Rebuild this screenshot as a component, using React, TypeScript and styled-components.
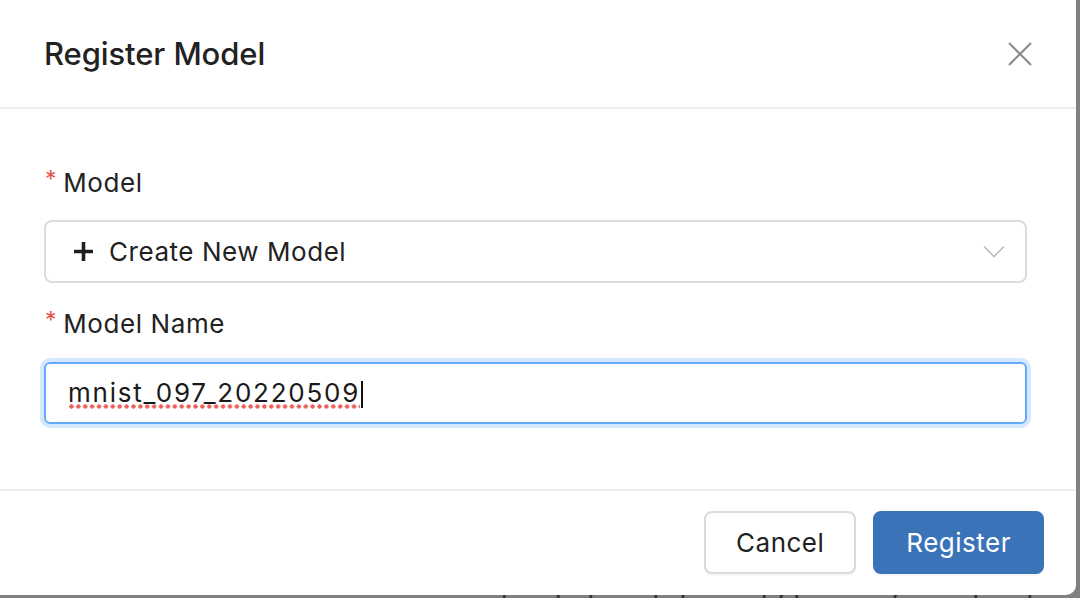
import React from "react";
import styled, { createGlobalStyle } from "styled-components";

const Global = createGlobalStyle`
  html, body { margin: 0; padding: 0; }
  body { font-family: Inter, "Liberation Sans", sans-serif; }
  * { box-sizing: border-box; }
`;

const Page = styled.div`
  position: relative;
  width: 1080px;
  height: 598px;
  overflow: hidden;
  background: #808080;
  padding: 589px 0 0 497px;
`;

const BehindCode = styled.div`
  font-family: "DejaVu Sans Mono", monospace;
  font-size: 27px;
  line-height: 30px;
  color: #2e2e2e;
  white-space: nowrap;
`;

const Modal = styled.div`
  position: absolute;
  top: 0;
  left: 0;
  width: 1076px;
  height: 595px;
  background: #fff;
  border-radius: 0 0 10px 0;
  display: flex;
  flex-direction: column;
  color: #222;
`;

const Header = styled.div`
  height: 109px;
  border-bottom: 2px solid #ededed;
  display: flex;
  align-items: center;
  justify-content: space-between;
  padding: 0 44px 0 44px;
`;

const Title = styled.h2`
  margin: 0;
  font-size: 31px;
  font-weight: 500;
  color: #222;
  letter-spacing: -0.1px;
`;

const CloseButton = styled.button`
  border: none;
  background: none;
  padding: 0;
  width: 24px;
  height: 24px;
  display: flex;
  cursor: pointer;
  margin-top: 1px;
`;

const Body = styled.div`
  flex: 1;
  padding: 56px 49px 0 44px;
  display: flex;
  flex-direction: column;
`;

const FormItem = styled.div<{ $gap: number }>`
  display: flex;
  flex-direction: column;
  margin-bottom: ${(p) => p.$gap}px;
`;

const Label = styled.label<{ $mb: number }>`
  font-size: 26px;
  line-height: 36px;
  letter-spacing: 0.6px;
  color: #222;
  display: flex;
  align-items: flex-start;
  margin-bottom: ${(p) => p.$mb}px;
  padding-left: 1px;
`;

const Required = styled.span`
  color: #e5534b;
  font-size: 23px;
  line-height: 20px;
  margin-right: 6px;
  margin-top: 4px;
`;

const SelectBox = styled.div`
  height: 63px;
  border: 2px solid #dcdcdc;
  border-radius: 8px;
  display: flex;
  align-items: center;
  padding: 0 20px 0 27px;
  font-size: 26px;
  letter-spacing: 0.55px;
  color: #222;
`;

const SelectValue = styled.span`
  flex: 1;
  display: flex;
  align-items: center;
  gap: 15px;
`;

const InputBox = styled.div`
  height: 62px;
  border: 2px solid #66a9f8;
  border-radius: 6px;
  box-shadow: 0 0 0 4px #d6e8fd;
  display: flex;
  align-items: center;
  padding: 0 22px;
  font-size: 26px;
  letter-spacing: 1.75px;
  color: #1a1a1a;
`;

const Misspelled = styled.span`
  background-image: radial-gradient(circle, #e9605a 1.9px, transparent 2.4px);
  background-size: 6.9px 5px;
  background-repeat: repeat-x;
  background-position: 0 100%;
  padding-bottom: 1px;
  margin-right: -1.75px;
`;

const Caret = styled.span`
  display: inline-block;
  width: 2px;
  height: 27px;
  background: #111;
  margin-left: 3px;
  margin-top: 2px;
`;

const Footer = styled.div`
  border-top: 2px solid #ededed;
  display: flex;
  justify-content: flex-end;
  align-items: flex-start;
  gap: 17px;
  padding: 20px 32px 0 0;
  flex: 0 0 106px;
`;

const Button = styled.button<{ $primary?: boolean }>`
  height: 63px;
  padding: 0 ${(p) => (p.$primary ? 31 : 30)}px;
  border-radius: 8px;
  border: 2px solid ${(p) => (p.$primary ? "#3b73b9" : "#dadada")};
  background: ${(p) => (p.$primary ? "#3b73b9" : "#fff")};
  color: ${(p) => (p.$primary ? "#fff" : "#222")};
  font-family: Inter, "Liberation Sans", sans-serif;
  font-size: 26px;
  letter-spacing: 0.5px;
  box-shadow: 0 2px 1px rgba(0, 0, 0, 0.03);
  cursor: pointer;
`;

const CloseIcon = () => (
  <svg width="24" height="24" viewBox="0 0 24 24">
    <path d="M1 1 L23 23 M23 1 L1 23" stroke="#8a8a8a" strokeWidth="2" fill="none" />
  </svg>
);

const PlusIcon = () => (
  <svg width="21" height="21" viewBox="0 0 21 21">
    <path d="M10.5 1 V20 M1 10.5 H20" stroke="#1e1e1e" strokeWidth="3.6" fill="none" />
  </svg>
);

const ChevronIcon = () => (
  <svg width="22" height="13" viewBox="0 0 22 13">
    <path d="M1 1.5 L11 11.5 L21 1.5" stroke="#bcbcbc" strokeWidth="1.6" fill="none" />
  </svg>
);

export default function App() {
  return (
    <>
      <Global />
      <Page>
        <BehindCode>loaded_model = mlflow.pyfunc.load_model(logged_model)</BehindCode>
        <Modal>
          <Header>
            <Title>Register Model</Title>
            <CloseButton aria-label="Close">
              <CloseIcon />
            </CloseButton>
          </Header>
          <Body>
            <FormItem $gap={23}>
              <Label $mb={19}>
                <Required>*</Required>Model
              </Label>
              <SelectBox>
                <SelectValue>
                  <PlusIcon />
                  Create New Model
                </SelectValue>
                <ChevronIcon />
              </SelectBox>
            </FormItem>
            <FormItem $gap={0}>
              <Label $mb={20}>
                <Required>*</Required>Model Name
              </Label>
              <InputBox>
                <Misspelled>mnist_097_20220509</Misspelled>
                <Caret />
              </InputBox>
            </FormItem>
          </Body>
          <Footer>
            <Button>Cancel</Button>
            <Button $primary>Register</Button>
          </Footer>
        </Modal>
      </Page>
    </>
  );
}
